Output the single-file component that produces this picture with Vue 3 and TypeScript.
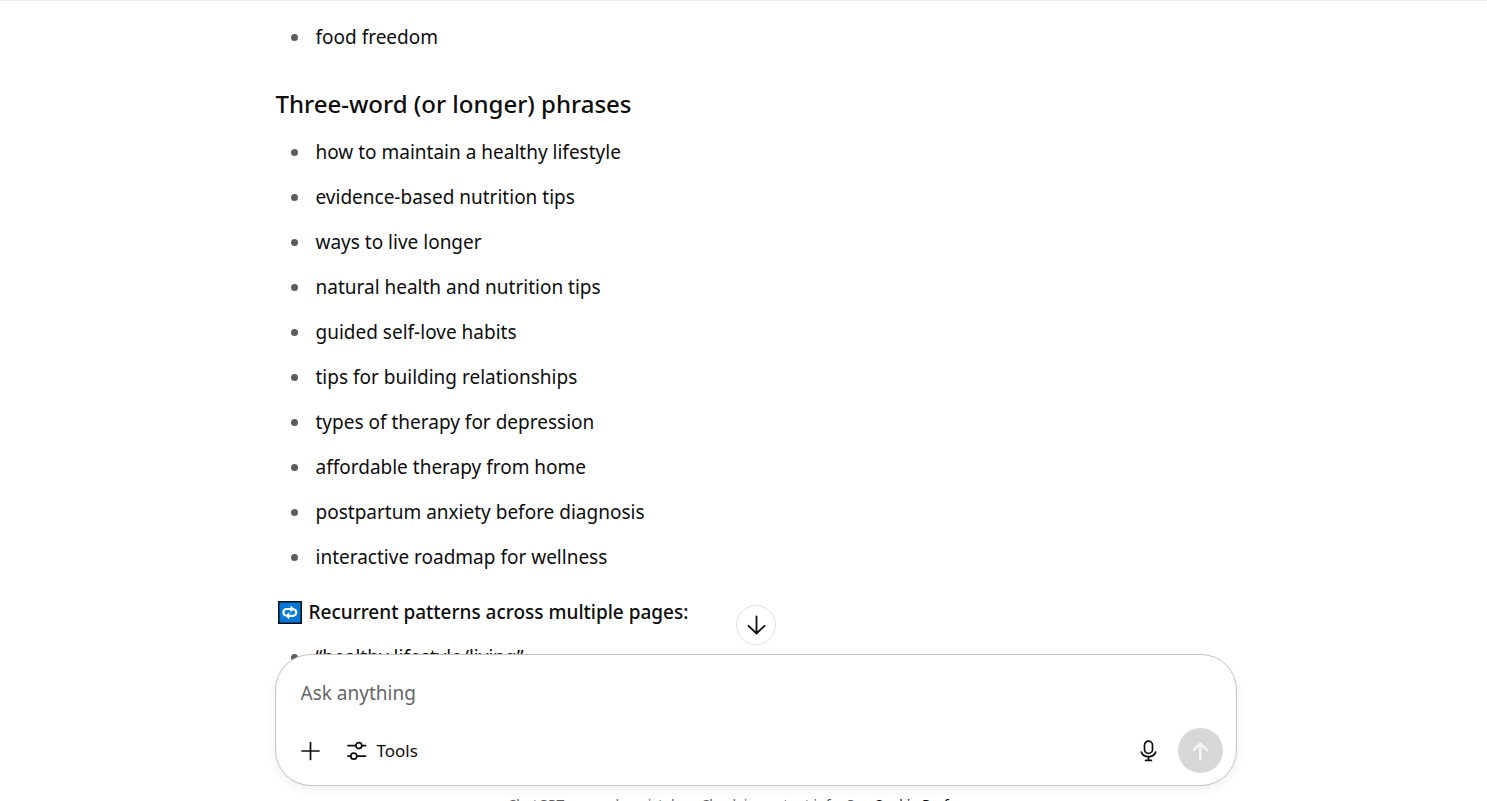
<script setup lang="ts">
import { ref } from 'vue'

const prompt = ref('')
const phrases: string[] = [
  'how to maintain a healthy lifestyle',
  'evidence-based nutrition tips',
  'ways to live longer',
  'natural health and nutrition tips',
  'guided self-love habits',
  'tips for building relationships',
  'types of therapy for depression',
  'affordable therapy from home',
  'postpartum anxiety before diagnosis',
  'interactive roadmap for wellness',
]
</script>

<template>
  <div class="page">
    <main class="thread">
      <article class="column">
        <ul>
          <li>food freedom</li>
        </ul>
        <h3>Three-word (or longer) phrases</h3>
        <ul>
          <li v-for="phrase in phrases" :key="phrase">{{ phrase }}</li>
        </ul>
        <p class="patterns">
          <svg class="emoji" viewBox="0 0 24 24" aria-hidden="true">
            <rect x="0.75" y="0.75" width="22.5" height="21.5" fill="#0078d7" stroke="#0a0f14" stroke-width="1.5" />
            <g fill="none" stroke="#fff" stroke-width="2.2">
              <path d="M7.4 14.6C4.2 12.6 5 8.2 8.6 8h4.8" />
              <path d="M16.2 8.2c3.2 2 2.4 6.4-1.2 6.6h-4.8" />
            </g>
            <path d="M12.4 4.4 16.6 8l-4.2 3.6zM11.2 11.2 7 14.8l4.2 3.6z" fill="#fff" />
          </svg>
          <strong>Recurrent patterns across multiple pages:</strong>
        </p>
        <ul>
          <li>“healthy lifestyle/living”</li>
        </ul>
      </article>
    </main>

    <div class="dock">
      <div class="column">
        <button class="scroll-down" type="button" aria-label="Scroll to bottom">
          <svg width="20" height="20" viewBox="0 0 20 20" fill="none" stroke="currentColor" stroke-width="1.8" stroke-linecap="round" stroke-linejoin="round">
            <path d="M10.5 1.5v17M2.5 10.8l8 7.7 8-7.7" />
          </svg>
        </button>
        <form class="composer" @submit.prevent>
          <input v-model="prompt" type="text" placeholder="Ask anything" aria-label="Ask anything" />
          <div class="actions">
            <button class="plain" type="button" aria-label="Add">
              <svg width="20" height="20" viewBox="0 0 20 20" fill="none" stroke="currentColor" stroke-width="1.7" stroke-linecap="round">
                <path d="M9.5 1.5v17M1 10h17" />
              </svg>
            </button>
            <button class="plain tools" type="button">
              <svg width="20" height="20" viewBox="0 0 20 20" fill="none" stroke="currentColor" stroke-width="1.7" stroke-linecap="round">
                <path d="M1 4.6h7.6M15 4.6h3.5M1 15.2h2.6M10 15.2h8.5" />
                <circle cx="11.8" cy="4.6" r="3" />
                <circle cx="6.8" cy="15.2" r="3" />
              </svg>
              <span>Tools</span>
            </button>
            <span class="spacer"></span>
            <button class="plain mic" type="button" aria-label="Dictate">
              <svg width="18" height="22" viewBox="0 0 18 22" fill="none" stroke="currentColor" stroke-width="1.7" stroke-linecap="round">
                <rect x="5.5" y="1.2" width="8" height="12.2" rx="4" />
                <path d="M2.3 12c1 2.9 3.8 4.7 7.2 4.7s6.2-1.8 7.2-4.7M9.5 16.7v3.6M6.6 20.4h5.8" />
              </svg>
            </button>
            <button class="send" type="submit" aria-label="Send">
              <svg width="20" height="20" viewBox="0 0 20 20" fill="none" stroke="currentColor" stroke-width="2.5" stroke-linecap="round" stroke-linejoin="round">
                <path d="M10.3 18V2.5M3.6 9.2l6.7-6.7 6.7 6.7" />
              </svg>
            </button>
          </div>
        </form>
        <p class="notice">ChatGPT can make mistakes. Check important info. See <a href="#">Cookie Preferences</a>.</p>
      </div>
    </div>
  </div>
</template>

<style>
body {
  margin: 0;
  background: #fff;
}
</style>

<style scoped>
* {
  box-sizing: border-box;
}

.page {
  position: relative;
  height: 100vh;
  overflow: hidden;
  border-top: 1px solid #ededed;
  color: #0d0d0d;
  font-family: "Segoe UI", "Noto Sans", "Open Sans", sans-serif;
  font-size: 19px;
  line-height: 35px;
}

.thread,
.dock {
  padding: 0 24px 0 48px;
}

.column {
  max-width: 962px;
  margin: 0 auto;
}

.thread {
  padding-top: 19px;
}

ul {
  display: grid;
  gap: 10px;
  margin: 0;
  padding: 0;
  list-style: none;
}

li {
  display: flex;
  align-items: center;
  gap: 18px;
  padding-left: 16px;
}

li::before {
  content: "";
  width: 7px;
  height: 7px;
  border-radius: 50%;
  background: #5d5d5d;
}

h3 {
  margin: 31px 0 14px;
  padding-left: 1px;
  font-size: 24px;
  font-weight: 500;
}

.patterns {
  display: flex;
  align-items: center;
  gap: 7px;
  margin: 20px 0 10px;
  padding-left: 3px;
}

.patterns strong {
  font-weight: 500;
}

.emoji {
  width: 24px;
  height: 24px;
}

.dock {
  position: absolute;
  right: 0;
  bottom: -16px;
  left: 0;
}

button {
  display: flex;
  align-items: center;
  justify-content: center;
  padding: 0;
  border: 0;
  background: none;
  color: inherit;
  font: inherit;
}

.scroll-down {
  width: 40px;
  height: 40px;
  margin: 0 auto 9px;
  border: 1px solid #e2e2e2;
  border-radius: 50%;
  background: #fff;
}

.composer {
  padding: 12px 13px;
  border: 1px solid #c4c4c4;
  border-radius: 36px;
  background: #fff;
  box-shadow: 0 4px 10px rgba(0, 0, 0, 0.06);
}

input {
  display: block;
  width: 100%;
  height: 52px;
  padding: 0 12px;
  border: 0;
  outline: 0;
  background: transparent;
  color: inherit;
  font: inherit;
}

input::placeholder {
  color: #666;
  opacity: 1;
}

.actions {
  display: flex;
  align-items: center;
  padding-top: 9px;
}

.plain {
  width: 44px;
  height: 45px;
}

.tools {
  gap: 10px;
  width: auto;
  margin-left: 14px;
  font-size: 17px;
}

.spacer {
  flex: 1;
}

.mic {
  margin-right: 8px;
}

.send {
  width: 45px;
  height: 45px;
  border-radius: 50%;
  background: #d7d7d7;
  color: #f4f4f4;
}

.notice {
  margin: 6px 0 0;
  color: #5d5d5d;
  font-size: 14px;
  line-height: 25px;
  text-align: center;
}

.notice a {
  color: #0d0d0d;
  text-decoration: none;
}
</style>
